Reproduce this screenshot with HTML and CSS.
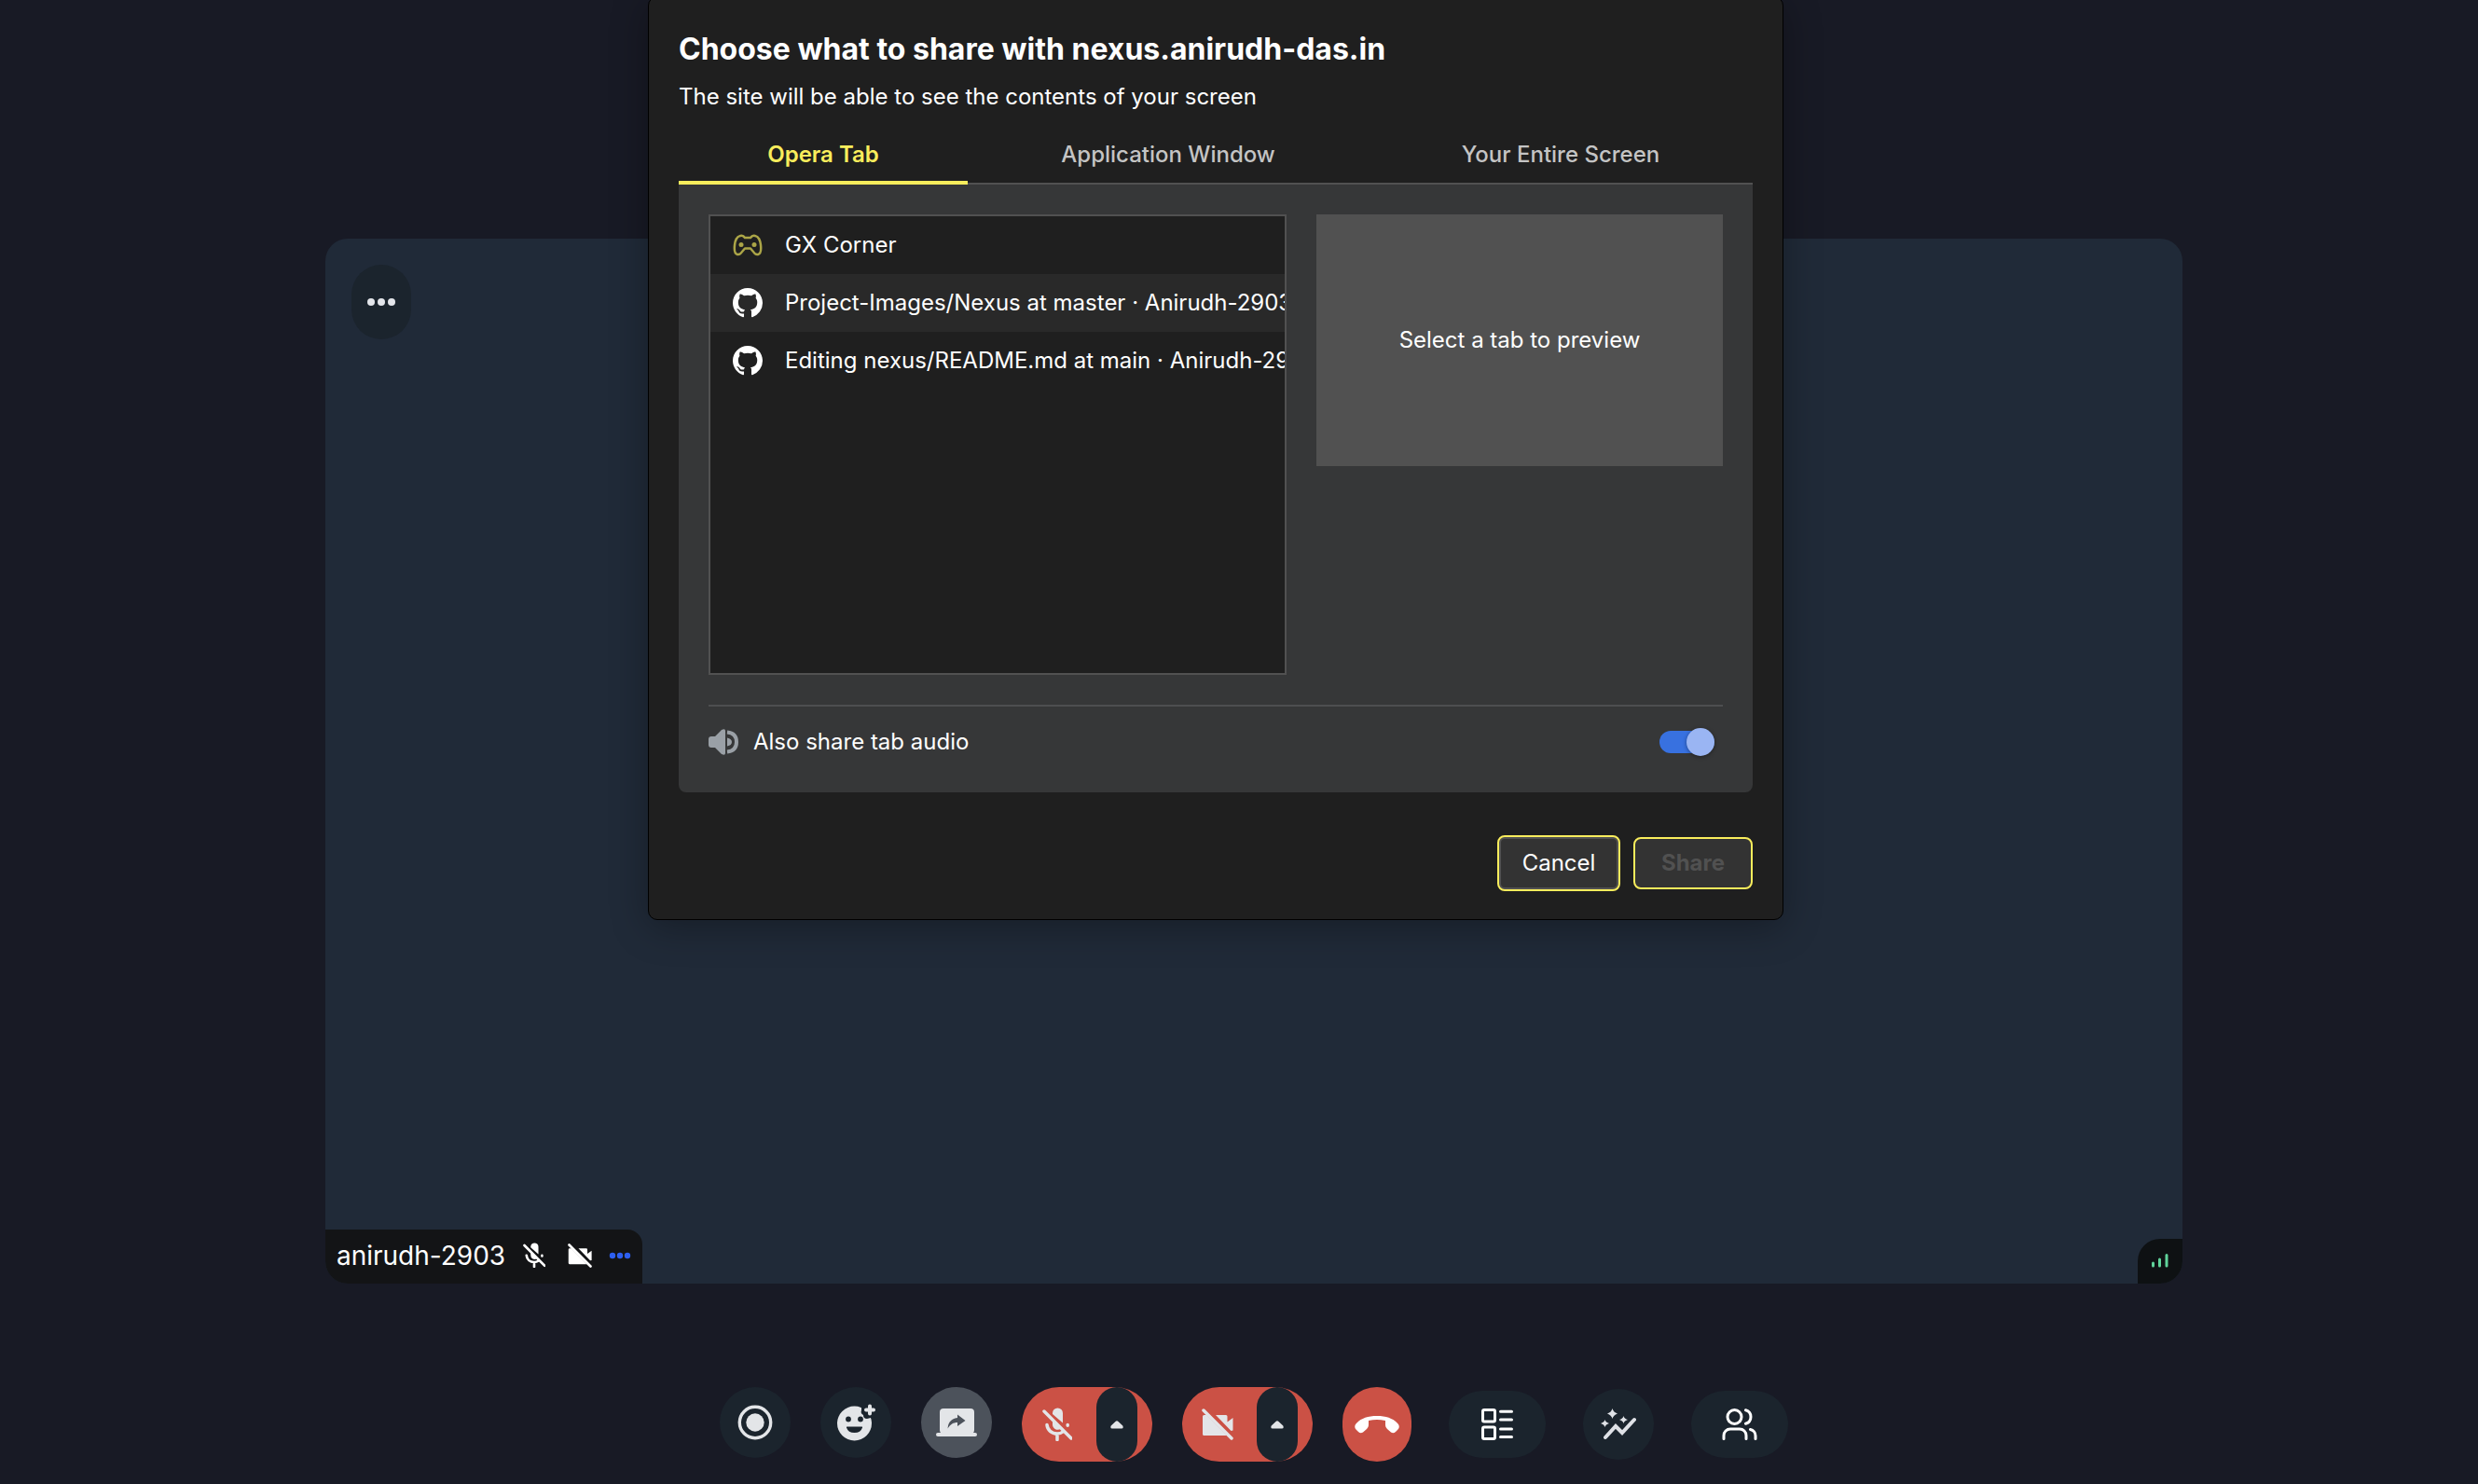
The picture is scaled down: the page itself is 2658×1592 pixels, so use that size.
FILE: index.html
```html
<!DOCTYPE html>
<html lang="en">
<head>
<meta charset="utf-8">
<title>Nexus meeting</title>
<link rel="stylesheet" href="styles.css">
</head>
<body>
<svg class="symbols" aria-hidden="true">
  <symbol id="octocat" viewBox="0 0 16 16"><path fill="currentColor" d="M8 0C3.58 0 0 3.58 0 8c0 3.54 2.29 6.53 5.47 7.59.4.07.55-.17.55-.38 0-.19-.01-.82-.01-1.49-2.01.37-2.53-.49-2.69-.94-.09-.23-.48-.94-.82-1.13-.28-.15-.68-.52-.01-.53.63-.01 1.08.58 1.23.82.72 1.21 1.87.87 2.33.66.07-.52.28-.87.51-1.07-1.78-.2-3.64-.89-3.64-3.95 0-.87.31-1.59.82-2.15-.08-.2-.36-1.02.08-2.12 0 0 .67-.21 2.2.82a7.6 7.6 0 0 1 4 0c1.53-1.04 2.2-.82 2.2-.82.44 1.1.16 1.92.08 2.12.51.56.82 1.27.82 2.15 0 3.07-1.87 3.75-3.65 3.95.29.25.54.73.54 1.48 0 1.07-.01 1.93-.01 2.2 0 .21.15.46.55.38A8.01 8.01 0 0 0 16 8c0-4.42-3.58-8-8-8z"/></symbol>
  <symbol id="mic-off" viewBox="0 0 32 36">
    <path fill="currentColor" d="M11 7v-1a5.500 5.500 0 0 1 11 0v10.500z M11 13l9 9.500a5.500 5.500 0 0 1-9-4.500z"/>
    <path fill="none" stroke="currentColor" stroke-width="3.500" stroke-linecap="round" d="M5 18.500c.5 5.500 5 9.500 11 9.500 2.500 0 4.500-.7 6-2M16 28v6.500M27.200 18.500v.8M2 4l29 29"/>
  </symbol>
  <symbol id="cam-off" viewBox="0 0 34 34">
    <path fill="currentColor" d="M1 8.500q0-1.500 1.500-1.500h2.500l22 22H2.500Q1 29 1 27.500z M15 7h11q1.500 0 1.500 1.500v6l6-4.500v13.500l-2 .5z"/>
    <path fill="none" stroke="currentColor" stroke-width="3.500" stroke-linecap="round" d="M2 2l30 30"/>
  </symbol>
  <symbol id="caret-up" viewBox="0 0 14 9"><path fill="currentColor" d="M5.500 1q1.500-1.500 3 0l4.800 4.600Q14.500 8.500 12 8.500H2Q-.5 8.500.7 5.600z"/></symbol>
</svg>

<main class="meeting">
  <section class="tile" aria-label="anirudh-2903">
    <button class="tile-menu" type="button" aria-label="Participant options">
      <svg width="30" height="8" viewBox="0 0 30 8"><g fill="#e3e5ea"><circle cx="4" cy="4" r="4"/><circle cx="15" cy="4" r="4"/><circle cx="26" cy="4" r="4"/></g></svg>
    </button>
    <footer class="tile-foot">
      <div class="nameplate">
        <span class="name">anirudh-2903</span>
        <svg class="np-mic" width="24" height="27"><use href="#mic-off"/></svg>
        <svg class="np-cam" width="26" height="26"><use href="#cam-off"/></svg>
        <svg width="24" height="8" viewBox="0 0 24 8"><g fill="#2d5ff0"><circle cx="4" cy="4" r="3.200"/><circle cx="12" cy="4" r="3.200"/><circle cx="20" cy="4" r="3.200"/></g></svg>
      </div>
      <div class="signal">
        <svg width="18" height="16" viewBox="0 0 18 16"><path fill="none" stroke="#5fd39a" stroke-width="3" stroke-linecap="round" d="M1.500 11v3M8.500 7v7M16 2.500v11.500"/></svg>
      </div>
    </footer>
  </section>

  <nav class="controls" aria-label="Call controls">
    <button class="round" type="button" aria-label="Record">
      <svg width="38" height="38" viewBox="0 0 38 38"><circle cx="19" cy="19" r="16.700" fill="none" stroke="#e3e5e8" stroke-width="3.400"/><circle cx="19" cy="19" r="9.700" fill="#e3e5e8"/></svg>
    </button>
    <button class="round" type="button" aria-label="Reactions">
      <svg width="42" height="40" viewBox="0 0 42 40"><circle cx="19.500" cy="21" r="18.500" fill="#e3e5e8"/><path fill="#1b242d" d="M27 0h15v14l-5 1-4 1a4 4 0 0 1-4-4 4 4 0 0 1-2-5z"/><circle cx="13" cy="16.500" r="2.900" fill="#1b242d"/><circle cx="26" cy="16.500" r="2.900" fill="#1b242d"/><path fill="#1b242d" d="M11.500 24.500h16q.8 0 .5 1-1.800 5.500-8.500 5.500t-8.500-5.500q-.3-1 .5-1z"/><path fill="none" stroke="#e3e5e8" stroke-width="4" stroke-linecap="round" d="M36 2.500v8M32 6.500h8"/></svg>
    </button>
    <button class="round active" type="button" aria-label="Share screen">
      <svg width="44" height="30" viewBox="0 0 44 30"><rect x="4" y="0" width="37" height="27" rx="4" fill="#e3e5e8"/><path d="M2 28h40" stroke="#e3e5e8" stroke-width="4" stroke-linecap="round"/><path fill="#4c525b" d="M12.500 21.500C13 14 17.500 10.500 23 10V6.500L31.500 13 23 19v-4c-4.500 0-7.500 2-10.500 6.500z"/></svg>
    </button>
    <div class="split">
      <button class="main" type="button" aria-label="Unmute"><svg width="32" height="36"><use href="#mic-off"/></svg></button>
      <button class="more" type="button" aria-label="Audio devices"><svg width="14" height="9"><use href="#caret-up"/></svg></button>
    </div>
    <div class="split">
      <button class="main" type="button" aria-label="Start camera"><svg width="34" height="34"><use href="#cam-off"/></svg></button>
      <button class="more" type="button" aria-label="Video devices"><svg width="14" height="9"><use href="#caret-up"/></svg></button>
    </div>
    <div class="side">
      <button class="hangup" type="button" aria-label="Leave call">
        <svg width="48" height="20" viewBox="0 0 48 20"><path fill="#fff" d="M24 1C13 1 5 4.500 1 10c-1.500 2.500-.5 4.500 1 6l2 2c1.500 1.500 3.500 1.500 5 .5l4-3.500c1.500-1.500 2-3 2-5V6q9-2 18 0v4c0 2 .5 3.500 2 5l4 3.500c1.500 1 3.500 1 5-.5l2-2c1.500-1.500 2.500-3.500 1-6-4-5.500-12-9-23-9z"/></svg>
      </button>
      <button class="pill" type="button" aria-label="Layout">
        <svg width="34" height="34" viewBox="0 0 34 34" fill="none" stroke="#fff" stroke-width="3" stroke-linecap="round"><rect x="1.500" y="1.500" width="13" height="12.500" rx="1.500"/><rect x="1.500" y="20" width="13" height="12.500" rx="1.500"/><path d="M20.500 3.200h12M20.500 12h12M20.500 22h12M20.500 30.500h12"/></svg>
      </button>
      <button class="round" type="button" aria-label="Call stats">
        <svg width="38" height="34" viewBox="0 0 38 34"><path fill="none" stroke="#dfe1e6" stroke-width="4" stroke-linecap="round" stroke-linejoin="miter" d="M5 31L16 19l7 7L36 12"/><path fill="#dfe1e6" d="M12.500 0q1 4 5.500 5.500-4.500 1.500-5.500 5.500-1-4-5.500-5.500 4.500-1.500 5.500-5.500zM24.500 8q.8 3 4.500 4-3.700 1-4.500 4-.8-3-4.500-4 3.700-1 4.500-4zM4.500 12q.8 3 4.500 4-3.700 1-4.500 4-.8-3-4.500-4 3.700-1 4.500-4z"/></svg>
      </button>
      <button class="pill" type="button" aria-label="Participants">
        <svg width="38" height="34" viewBox="0 0 38 34" fill="none" stroke="#fff" stroke-width="3" stroke-linecap="round"><circle cx="13.500" cy="9" r="7.500"/><path d="M2 32.500V29a7 7 0 0 1 7-7h10a7 7 0 0 1 7 7v3.500M25.500 1.700a7.600 7.600 0 0 1 0 14.600M30.500 22.500a7 7 0 0 1 5.500 7v3"/></svg>
      </button>
    </div>
  </nav>
</main>

<div class="dialog" role="dialog" aria-labelledby="share-title">
  <h1 id="share-title">Choose what to share with nexus.anirudh-das.in</h1>
  <p class="sub">The site will be able to see the contents of your screen</p>
  <div class="tabs" role="tablist">
    <button class="tab selected" type="button" role="tab" aria-selected="true">Opera Tab</button>
    <button class="tab" type="button" role="tab" aria-selected="false">Application Window</button>
    <button class="tab" type="button" role="tab" aria-selected="false">Your Entire Screen</button>
  </div>
  <div class="panel">
    <div class="columns">
      <ul class="sources">
        <li><svg class="pad" width="32" height="32" viewBox="0 0 32 32"><path fill="none" stroke="currentColor" stroke-width="2.500" stroke-linejoin="round" d="M8 6q3-1 5 2h6q2-3 5-2 5 1 6 10 1 9-3 10-3 .5-5-3l-3-3.500h-6L10 23q-2 3.500-5 3-4-1-3-10Q3 7 8 6z"/><circle cx="9" cy="15.500" r="2.500" fill="currentColor"/><circle cx="23" cy="15.500" r="2.500" fill="currentColor"/></svg><span>GX Corner</span></li>
        <li class="hover"><svg width="32" height="32"><use href="#octocat"/></svg><span>Project-Images/Nexus at master · Anirudh-2903/Project-Images</span></li>
        <li><svg width="32" height="32"><use href="#octocat"/></svg><span>Editing nexus/README.md at main · Anirudh-2903/nexus</span></li>
      </ul>
      <div class="preview">Select a tab to preview</div>
    </div>
    <div class="audio">
      <svg width="32" height="28" viewBox="0 0 32 28"><path fill="#9aa0a6" d="M0 11q0-3 3-3h4l7-7q4-2 4 1v24q0 3-4 1l-7-7H3q-3 0-3-3zM20 9.500q5 1 5 4.500t-5 4.500z"/><path fill="none" stroke="#9aa0a6" stroke-width="4" d="M20 3.500q10 1 10 10.500t-10 10.500"/></svg>
      <label for="tab-audio">Also share tab audio</label>
      <input class="switch" id="tab-audio" type="checkbox" role="switch" checked>
    </div>
  </div>
  <div class="actions">
    <button class="cancel" type="button">Cancel</button>
    <button class="share" type="button" disabled>Share</button>
  </div>
</div>
</body>
</html>
```
FILE: styles.css
```css
* { box-sizing: border-box; }

body {
  margin: 0;
  min-height: 100vh;
  background: #181a25;
  color: #fff;
  font-family: Inter, "Liberation Sans", sans-serif;
  font-size: 24px;
  line-height: 32px;
}

button {
  margin: 0;
  padding: 0;
  border: 0;
  background: none;
  color: inherit;
  font: inherit;
}

svg { display: block; flex: none; }
.symbols { position: absolute; width: 0; height: 0; }

/* Meeting stage */
.meeting {
  display: flex;
  flex-direction: column;
  align-items: center;
  justify-content: space-between;
  min-height: 100vh;
  padding: 256px 0 24px 32px;
}

.tile {
  display: flex;
  flex-direction: column;
  justify-content: space-between;
  align-items: flex-start;
  width: 75.86%;
  aspect-ratio: 16 / 9;
  border-radius: 24px;
  background: #202a38;
  overflow: hidden;
}

.tile-menu {
  display: flex;
  align-items: center;
  justify-content: center;
  width: 64px;
  height: 80px;
  margin: 28px;
  border-radius: 32px;
  background: #1b242d;
}

.tile-foot {
  display: flex;
  align-items: flex-end;
  justify-content: space-between;
  width: 100%;
}

.nameplate {
  display: flex;
  align-items: center;
  height: 58px;
  padding: 0 12px 2px;
  border-radius: 0 16px 0 0;
  background: #131416;
}

.name { font-size: 28px; }
.np-mic { margin-left: 19px; }
.np-cam { margin: 0 18px 0 24px; }

.signal {
  display: flex;
  align-items: center;
  justify-content: center;
  width: 48px;
  height: 48px;
  padding-bottom: 2px;
  border-radius: 24px 0 0 0;
  background: #0e1113;
}

/* Call controls */
.controls {
  display: flex;
  align-items: flex-start;
  gap: 32px;
}

.side {
  display: flex;
  align-items: center;
  gap: 40px;
}

.round, .pill, .hangup {
  display: flex;
  align-items: center;
  justify-content: center;
  background: #1b242d;
}

.round { width: 76px; height: 76px; border-radius: 50%; }
.round.active { background: #4c525b; }
.pill { width: 104px; height: 72px; border-radius: 36px; }
.hangup { width: 74px; height: 80px; border-radius: 37px; background: #cb5145; }

.split {
  display: flex;
  width: 140px;
  height: 80px;
  border-radius: 40px;
  background: #cb5145;
  color: #e3e5e8;
}

.main, .more {
  display: flex;
  align-items: center;
  justify-content: center;
}

.main { width: 80px; padding-right: 4px; }
.more { width: 44px; border-radius: 22px; background: #1b242d; }

/* Share dialog */
.dialog {
  position: absolute;
  top: -4px;
  left: 50%;
  width: 1218px;
  margin-left: -634px;
  padding: 36px 32px 30px;
  border: 1px solid #000;
  border-radius: 10px;
  background: #1f1f1f;
  box-shadow: 0 8px 40px rgba(0, 0, 0, 0.3);
}

h1 {
  margin: 0;
  font-size: 32px;
  line-height: 40px;
  font-weight: 700;
}

.sub { margin: 15px 0 0; }

.tabs {
  display: grid;
  grid-template-columns: 310fr 430fr 412fr;
  margin-top: 12px;
  border-bottom: 2px solid #515151;
}

.tab {
  height: 66px;
  margin-bottom: -2px;
  padding-top: 6px;
  border-bottom: 4px solid transparent;
  color: #c4c4c4;
  font-weight: 500;
}

.tab.selected {
  border-color: #f9ed5c;
  color: #f9ed5c;
  font-weight: 600;
}

.panel {
  padding: 32px;
  border-radius: 0 0 8px 8px;
  background: #363738;
}

.columns {
  display: flex;
  align-items: flex-start;
  gap: 32px;
}

.sources {
  flex: 1;
  min-width: 0;
  height: 494px;
  margin: 0;
  padding: 0;
  border: 2px solid #515151;
  background: #1f1f1f;
  list-style: none;
  overflow: hidden;
}

.sources li {
  display: flex;
  align-items: center;
  gap: 24px;
  height: 62px;
  padding-left: 24px;
  white-space: nowrap;
}

.sources .hover { background: #292929; }
.pad { color: #aba547; }

.preview {
  display: flex;
  align-items: center;
  justify-content: center;
  width: 436px;
  height: 270px;
  background: #515151;
}

.audio {
  display: flex;
  align-items: center;
  gap: 16px;
  margin-top: 32px;
  padding: 22px 9px 6px 0;
  border-top: 2px solid #4d4e50;
}

.switch {
  appearance: none;
  display: flex;
  align-items: center;
  justify-content: flex-end;
  width: 59px;
  height: 24px;
  margin: 0 0 0 auto;
  border-radius: 12px;
  background: #3871e0;
}

.switch::before {
  content: "";
  flex: none;
  width: 30px;
  height: 30px;
  border-radius: 50%;
  background: #9ab5f3;
  box-shadow: 0 1px 4px rgba(0, 0, 0, 0.4);
}

.actions {
  display: flex;
  align-items: center;
  justify-content: flex-end;
  gap: 14px;
  margin-top: 46px;
}

.cancel, .share {
  border: 2px solid #f9ed5c;
  border-radius: 8px;
  background: #333;
}

.cancel {
  width: 132px;
  height: 60px;
  box-shadow: inset 0 0 0 2px #515151;
}

.share {
  width: 128px;
  height: 56px;
  color: #515151;
  font-weight: 700;
}
```
